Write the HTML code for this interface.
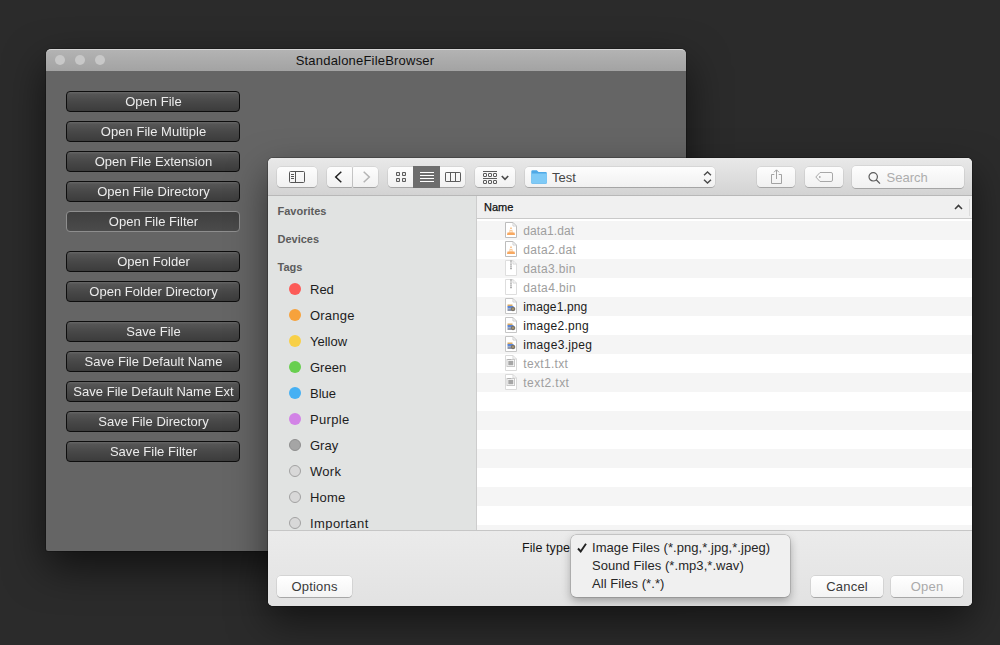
<!DOCTYPE html>
<html lang="en">
<head>
<meta charset="utf-8">
<title>StandaloneFileBrowser</title>
<style>
*{box-sizing:border-box;margin:0;padding:0}
html,body{width:1000px;height:645px;overflow:hidden}
body{background:#2b2b2b;font-family:"Liberation Sans",sans-serif;font-size:13px;position:relative}
.abs{position:absolute}
svg{display:block}
/* Unity window */
#uwin{position:absolute;left:46px;top:49px;width:640px;height:502px;background:#656565;border-radius:5px 5px 2px 2px;box-shadow:0 16px 40px rgba(0,0,0,.6),0 0 0 1px rgba(0,0,0,.22)}
#utitle{position:absolute;left:0;top:0;width:640px;height:22px;border-radius:5px 5px 0 0;background:linear-gradient(#b3b3b3,#a3a3a3);border-top:1px solid #d6d6d6;text-align:center;font-size:13px;line-height:21px;color:#111;letter-spacing:.2px;padding-right:2px}
.tl{position:absolute;top:6px;width:10px;height:10px;border-radius:50%;background:#c8c8c8}
.ub{position:absolute;left:20px;width:174px;height:21px;border:1px solid #0e0e0e;border-radius:4px;background:linear-gradient(#666 0,#555 12%,#484848 50%,#3c3c3c 100%);color:#ececec;font-size:13px;line-height:19px;text-align:center;letter-spacing:.03px;padding-left:1px;will-change:transform}
.ub.sel{border-color:#8e8e8e;background:linear-gradient(#3f3f3f,#4b4b4b)}
/* dialog */
#dlgshadow{position:absolute;left:268px;top:158px;width:704px;height:448px;border-radius:5px;box-shadow:0 16px 38px rgba(0,0,0,.52),0 0 0 1px rgba(0,0,0,.22)}
#dlg{position:absolute;left:268px;top:158px;width:704px;height:448px;border-radius:5px;background:#fff;overflow:hidden}
#tb{position:absolute;left:0;top:0;width:704px;height:38px;background:linear-gradient(#e9e9e9,#d3d3d3);border-bottom:1px solid #b8b8b8}
.btn{position:absolute;top:9px;height:20px;border-radius:4px;background:linear-gradient(#fdfdfd,#f1f1f1);box-shadow:0 0 0 .5px rgba(0,0,0,.12),0 1px 0 rgba(0,0,0,.18)}
.btn svg{position:absolute}
#side{position:absolute;left:0;top:38px;width:209px;height:334px;background:#e1e3e2;border-right:1px solid #cdcdcd}
.sh{position:absolute;left:9.500px;font-size:11px;font-weight:bold;color:#5c5c5c;line-height:14px;margin-top:-1px}
.tag{position:absolute;left:42px;font-size:13px;color:#1d1d1d;line-height:16px;margin-top:1px;white-space:nowrap}
.dot{position:absolute;left:21px;width:12px;height:12px;border-radius:50%}
#list{position:absolute;left:209px;top:38px;width:495px;height:334px;background:#fff;overflow:hidden}
#hdr{position:absolute;left:0;top:0;width:495px;height:23px;background:#f0f0f0;border-bottom:1px solid #c9c9c9;font-size:11px;color:#111;-webkit-text-stroke:.25px #111}
.hn{left:7px;top:5px;line-height:13px}
.row{position:absolute;left:0;width:495px;height:19px}
.row.g{background:#f5f5f5}
.row svg{position:absolute;left:28px;top:1px}
.fn{position:absolute;left:46.300px;top:1px;line-height:19px;font-size:12px;color:#9e9e9e;white-space:nowrap;letter-spacing:.1px}
.fn.on{color:#1b1b1b}
#bot{position:absolute;left:0;top:372px;width:704px;height:76px;background:linear-gradient(#ebebeb,#e2e2e2);border-top:1px solid #c6c6c6}
.pb{position:absolute;top:44.500px;height:21px;letter-spacing:.2px;border-radius:4px;background:linear-gradient(#fff,#f4f4f4);box-shadow:0 0 0 .5px rgba(0,0,0,.15),0 1px 0 rgba(0,0,0,.2);text-align:center;font-size:13px;line-height:21px;color:#3a3a3a}
#menu{position:absolute;left:303px;top:377px;width:219px;height:62px;border-radius:5px;background:#f0f0f0;box-shadow:0 0 0 .5px rgba(0,0,0,.25),0 4px 10px rgba(0,0,0,.3)}
.mi{position:absolute;left:21px;font-size:13px;color:#262626;line-height:18px;white-space:nowrap;letter-spacing:.06px}
</style>
</head>
<body>

<div id="uwin">
  <div id="utitle"><span>StandaloneFileBrowser</span></div>
  <div class="tl" style="left:9px"></div>
  <div class="tl" style="left:29px"></div>
  <div class="tl" style="left:49px"></div>
  <div class="ub" style="top:42px">Open File</div>
  <div class="ub" style="top:72px">Open File Multiple</div>
  <div class="ub" style="top:102px">Open File Extension</div>
  <div class="ub" style="top:132px">Open File Directory</div>
  <div class="ub sel" style="top:162px">Open File Filter</div>
  <div class="ub" style="top:202px">Open Folder</div>
  <div class="ub" style="top:232px">Open Folder Directory</div>
  <div class="ub" style="top:272px">Save File</div>
  <div class="ub" style="top:302px">Save File Default Name</div>
  <div class="ub" style="top:332px">Save File Default Name Ext</div>
  <div class="ub" style="top:362px">Save File Directory</div>
  <div class="ub" style="top:392px">Save File Filter</div>
</div>
<div id="dlgshadow"></div>
<div id="dlg">
  <div id="tb">
    <div class="btn" style="left:9px;width:40px">
      <svg style="left:12px;top:4px" width="16" height="12" viewBox="0 0 16 12"><rect x=".5" y=".5" width="15" height="11" rx="1" fill="none" stroke="#555"/><path d="M6.500 .5V11.500" stroke="#555" fill="none"/><path d="M2 3.500H5M2 5.500H5M2 7.500H5" stroke="#555" fill="none"/></svg>
    </div>
    <div class="btn" style="left:59px;width:25px;border-radius:4px 1px 1px 4px">
      <svg style="left:7px;top:4px" width="9" height="12" viewBox="0 0 9 12"><path d="M7.300 .7 L1.700 6 L7.300 11.300" fill="none" stroke="#222" stroke-width="1.500"/></svg>
    </div>
    <div class="btn" style="left:85px;width:25px;border-radius:1px 4px 4px 1px">
      <svg style="left:9px;top:4px" width="9" height="12" viewBox="0 0 9 12"><path d="M1.700 .7 L7.300 6 L1.700 11.300" fill="none" stroke="#b4b4b4" stroke-width="1.500"/></svg>
    </div>
    <div class="btn" style="left:120px;width:77px">
      <div class="abs" style="left:25px;top:-1px;width:27px;height:22px;background:#6e6e6e"></div>
      <svg style="left:8px;top:5px" width="10" height="10" viewBox="0 0 10 10"><g fill="none" stroke="#5c5c5c" stroke-width="1.100"><rect x=".55" y=".55" width="2.900" height="2.900" rx=".4"/><rect x="6.550" y=".55" width="2.900" height="2.900" rx=".4"/><rect x=".55" y="6.550" width="2.900" height="2.900" rx=".4"/><rect x="6.550" y="6.550" width="2.900" height="2.900" rx=".4"/></g></svg>
      <svg style="left:32px;top:5px" width="14" height="10" viewBox="0 0 14 10"><path d="M0 .5H14M0 3.500H14M0 6.500H14M0 9.500H14" stroke="#fff" fill="none"/></svg>
      <svg style="left:57px;top:5px" width="16" height="10" viewBox="0 0 16 10"><g fill="none" stroke="#5c5c5c"><rect x=".5" y=".5" width="15" height="9" rx=".6"/><path d="M5.500 .5V9.500M10.500 .5V9.500"/></g></svg>
    </div>
    <div class="btn" style="left:207px;width:40px">
      <svg style="left:8px;top:4px" width="14" height="14" viewBox="0 0 14 14"><g fill="none" stroke="#5c5c5c"><path d="M0 .5H14M0 7.500H14"/><rect x=".5" y="2.500" width="3" height="3" rx=".3"/><rect x="5.500" y="2.500" width="3" height="3" rx=".3"/><rect x="10.500" y="2.500" width="3" height="3" rx=".3"/><rect x=".5" y="9.500" width="3" height="3" rx=".3"/><rect x="5.500" y="9.500" width="3" height="3" rx=".3"/><rect x="10.500" y="9.500" width="3" height="3" rx=".3"/></g></svg>
      <svg style="left:26px;top:8px" width="8" height="6" viewBox="0 0 8 6"><path d="M.8 1 L4 4.400 L7.200 1" fill="none" stroke="#4a4a4a" stroke-width="1.600"/></svg>
    </div>
    <div class="btn" style="left:257px;width:190px">
      <svg style="left:6px;top:3px" width="16" height="14" viewBox="0 0 16 14"><path d="M.3 1.500 Q.3 .3 1.500 .3 H5.800 L7.500 2 H14.800 Q15.800 2 15.800 3 V12.800 Q15.800 13.800 14.800 13.800 H1.300 Q.3 13.800 .3 12.800Z" fill="#4fa9e6"/><path d="M.3 3.600 H15.800 V12.600 Q15.800 13.500 14.800 13.500 H1.300 Q.3 13.500 .3 12.600Z" fill="#7fcaf6"/></svg>
      <span class="abs" style="left:27px;top:3px;font-size:13px;line-height:16px;color:#464646">Test</span>
      <svg style="left:178px;top:4px" width="9" height="13" viewBox="0 0 9 13"><path d="M1 4.300 L4.500 1 L8 4.300M1 8.700 L4.500 12 L8 8.700" fill="none" stroke="#4a4a4a" stroke-width="1.400"/></svg>
    </div>
    <div class="btn" style="left:489px;width:38px">
      <svg style="left:13px;top:2px" width="13" height="16" viewBox="0 0 13 16"><g fill="none" stroke="#a2a2a2"><path d="M4.300 5.500H1.500V14.500H11.500V5.500H8.700"/><path d="M6.500 10V1M4 3.300L6.500 .8L9 3.300"/></g></svg>
    </div>
    <div class="btn" style="left:537px;width:38px">
      <svg style="left:10px;top:5px" width="18" height="10" viewBox="0 0 18 10"><path d="M5 .5H16Q17.500 .5 17.500 2V8Q17.500 9.500 16 9.500H5L.8 5Z" fill="none" stroke="#a8a8a8"/><circle cx="4.800" cy="5" r=".9" fill="#a8a8a8"/></svg>
    </div>
    <div class="btn" style="left:584px;width:112px;top:8px;height:22px">
      <svg style="left:16px;top:6px" width="14" height="14" viewBox="0 0 14 14"><circle cx="5.200" cy="4.800" r="4.200" fill="none" stroke="#5a5a5a" stroke-width="1.200"/><path d="M8.200 7.800L12 11.600" stroke="#5a5a5a" stroke-width="1.300" fill="none"/></svg>
      <span class="abs" style="left:34.500px;top:4px;font-size:13px;line-height:16px;color:#adadad">Search</span>
    </div>
  </div>

  <div id="side">
    <div class="sh" style="top:9px">Favorites</div>
    <div class="sh" style="top:37px">Devices</div>
    <div class="sh" style="top:65px">Tags</div>
    <div class="dot" style="top:87px;background:#fc5b57"></div><div class="tag" style="top:85px">Red</div>
    <div class="dot" style="top:113px;background:#f7a23b"></div><div class="tag" style="top:111px;letter-spacing:0.2px">Orange</div>
    <div class="dot" style="top:139px;background:#f8d047"></div><div class="tag" style="top:137px">Yellow</div>
    <div class="dot" style="top:165px;background:#68cf4f"></div><div class="tag" style="top:163px">Green</div>
    <div class="dot" style="top:191px;background:#45b0f3"></div><div class="tag" style="top:189px">Blue</div>
    <div class="dot" style="top:217px;background:#d283e6"></div><div class="tag" style="top:215px;letter-spacing:0.33px">Purple</div>
    <div class="dot" style="top:243px;background:#a5a5a5;border:1px solid #8f8f8f"></div><div class="tag" style="top:241px">Gray</div>
    <div class="dot" style="top:269px;background:#d8d8d8;border:1px solid #a2a2a2"></div><div class="tag" style="top:267px;letter-spacing:0.3px">Work</div>
    <div class="dot" style="top:295px;background:#d8d8d8;border:1px solid #a2a2a2"></div><div class="tag" style="top:293px;letter-spacing:0.15px">Home</div>
    <div class="dot" style="top:321px;background:#d8d8d8;border:1px solid #a2a2a2"></div><div class="tag" style="top:319px;letter-spacing:0.42px">Important</div>
  </div>
  <div id="list">
    <div id="hdr"><span class="abs hn">Name</span><svg class="abs" style="left:477px;top:8px" width="9" height="6" viewBox="0 0 9 6"><path d="M1 5 L4.5 1.4 L8 5" fill="none" stroke="#3c3c3c" stroke-width="1.5"/></svg><div class="abs" style="left:492px;top:3px;width:1px;height:17px;background:#dcdcdc"></div></div>
    <div class="row g" style="top:25px"><svg width="12" height="16" viewBox="0 0 12 16"><path d="M.5 .5H8L11.500 4V15.500H.5Z" fill="#fff" stroke="#bdbdbd"/><path d="M8 .5V4H11.500" fill="none" stroke="#cfcfcf"/><path d="M6 4.500L8.200 10.500H3.800Z" fill="#f8b878"/><path d="M2.500 10.500H9.500L10 13H2Z" fill="#f7a860"/><path d="M4.800 7.500H7.200M4.300 9.200H7.700" stroke="#fff" stroke-width=".9"/></svg><span class="fn" style="letter-spacing:0.1px">data1.dat</span></div>
    <div class="row" style="top:44px"><svg width="12" height="16" viewBox="0 0 12 16"><path d="M.5 .5H8L11.500 4V15.500H.5Z" fill="#fff" stroke="#bdbdbd"/><path d="M8 .5V4H11.500" fill="none" stroke="#cfcfcf"/><path d="M6 4.500L8.200 10.500H3.800Z" fill="#f8b878"/><path d="M2.500 10.500H9.500L10 13H2Z" fill="#f7a860"/><path d="M4.800 7.500H7.200M4.300 9.200H7.700" stroke="#fff" stroke-width=".9"/></svg><span class="fn" style="letter-spacing:0.32px">data2.dat</span></div>
    <div class="row g" style="top:63px"><svg width="12" height="16" viewBox="0 0 12 16"><path d="M.5 .5H8L11.500 4V15.500H.5Z" fill="#fff" stroke="#dedede"/><path d="M8 .5V4H11.500" fill="none" stroke="#d6d6d6"/><path d="M6 .5V10" stroke="#8c8c8c" stroke-width="1.400" stroke-dasharray="1.200 .7" fill="none"/></svg><span class="fn" style="letter-spacing:0.35px">data3.bin</span></div>
    <div class="row" style="top:82px"><svg width="12" height="16" viewBox="0 0 12 16"><path d="M.5 .5H8L11.500 4V15.500H.5Z" fill="#fff" stroke="#dedede"/><path d="M8 .5V4H11.500" fill="none" stroke="#d6d6d6"/><path d="M6 .5V10" stroke="#8c8c8c" stroke-width="1.400" stroke-dasharray="1.200 .7" fill="none"/></svg><span class="fn" style="letter-spacing:0.38px">data4.bin</span></div>
    <div class="row g" style="top:101px"><svg width="12" height="16" viewBox="0 0 12 16"><path d="M.5 .5H8L11.500 4V15.500H.5Z" fill="#fff" stroke="#c6c6c6"/><path d="M8 .5V4H11.500" fill="none" stroke="#cfcfcf"/><rect x="2.500" y="6.500" width="5" height="2" fill="#d8a860"/><rect x="2.500" y="8" width="6" height="2.500" fill="#5a86d8"/><rect x="2.500" y="10.500" width="4" height="2.500" fill="#8e96a8"/><circle cx="8" cy="11" r="2.300" fill="#7a756c"/><circle cx="8" cy="11" r="1" fill="#b09a70"/></svg><span class="fn on" style="letter-spacing:0.14px">image1.png</span></div>
    <div class="row" style="top:120px"><svg width="12" height="16" viewBox="0 0 12 16"><path d="M.5 .5H8L11.500 4V15.500H.5Z" fill="#fff" stroke="#c6c6c6"/><path d="M8 .5V4H11.500" fill="none" stroke="#cfcfcf"/><rect x="2.500" y="6.500" width="5" height="2" fill="#d8a860"/><rect x="2.500" y="8" width="6" height="2.500" fill="#5a86d8"/><rect x="2.500" y="10.500" width="4" height="2.500" fill="#8e96a8"/><circle cx="8" cy="11" r="2.300" fill="#7a756c"/><circle cx="8" cy="11" r="1" fill="#b09a70"/></svg><span class="fn on" style="letter-spacing:0.3px">image2.png</span></div>
    <div class="row g" style="top:139px"><svg width="12" height="16" viewBox="0 0 12 16"><path d="M.5 .5H8L11.500 4V15.500H.5Z" fill="#fff" stroke="#c6c6c6"/><path d="M8 .5V4H11.500" fill="none" stroke="#cfcfcf"/><rect x="2.500" y="6.500" width="5" height="2" fill="#d8a860"/><rect x="2.500" y="8" width="6" height="2.500" fill="#5a86d8"/><rect x="2.500" y="10.500" width="4" height="2.500" fill="#8e96a8"/><circle cx="8" cy="11" r="2.300" fill="#7a756c"/><circle cx="8" cy="11" r="1" fill="#b09a70"/></svg><span class="fn on" style="letter-spacing:0.33px">image3.jpeg</span></div>
    <div class="row" style="top:158px"><svg width="12" height="16" viewBox="0 0 12 16"><path d="M.5 .5H8L11.500 4V15.500H.5Z" fill="#fff" stroke="#dadada"/><path d="M8 .5V4H11.500" fill="none" stroke="#d6d6d6"/><rect x="2" y="4.500" width="7.500" height="7" fill="#fff" stroke="#c8c8c8"/><rect x="3.300" y="5.800" width="5" height="4.500" fill="#a6a6a6"/><path d="M2.500 4.500H6" stroke="#b0b0b0" stroke-width="1"/></svg><span class="fn" style="letter-spacing:0.32px">text1.txt</span></div>
    <div class="row g" style="top:177px"><svg width="12" height="16" viewBox="0 0 12 16"><path d="M.5 .5H8L11.500 4V15.500H.5Z" fill="#fff" stroke="#dadada"/><path d="M8 .5V4H11.500" fill="none" stroke="#d6d6d6"/><rect x="2" y="4.500" width="7.500" height="7" fill="#fff" stroke="#c8c8c8"/><rect x="3.300" y="5.800" width="5" height="4.500" fill="#a6a6a6"/><path d="M2.500 4.500H6" stroke="#b0b0b0" stroke-width="1"/></svg><span class="fn" style="letter-spacing:0.45px">text2.txt</span></div>
    <div class="row" style="top:196px"></div>
    <div class="row g" style="top:215px"></div>
    <div class="row" style="top:234px"></div>
    <div class="row g" style="top:253px"></div>
    <div class="row" style="top:272px"></div>
    <div class="row g" style="top:291px"></div>
    <div class="row" style="top:310px"></div>
    <div class="row g" style="top:329px"></div>
  </div>
  <div id="bot">
    <div class="abs" style="left:254px;top:9.500px;font-size:12.500px;line-height:14px;color:#151515;letter-spacing:.08px;white-space:nowrap">File type</div>
    <div class="pb" style="left:9px;width:75px">Options</div>
    <div class="pb" style="left:542.800px;width:72.600px">Cancel</div>
    <div class="pb" style="left:622.800px;width:72.600px;color:#aaa">Open</div>
  </div>
  <div id="menu">
    <svg class="abs" style="left:6px;top:8px" width="10" height="10" viewBox="0 0 10 10"><path d="M1 5.500L3.700 8.500L9 .8" fill="none" stroke="#222" stroke-width="1.900"/></svg>
    <div class="mi" style="top:4px">Image Files (*.png,*.jpg,*.jpeg)</div>
    <div class="mi" style="top:22px">Sound Files (*.mp3,*.wav)</div>
    <div class="mi" style="top:40px">All Files (*.*)</div>
  </div>

</div>
</body>
</html>
